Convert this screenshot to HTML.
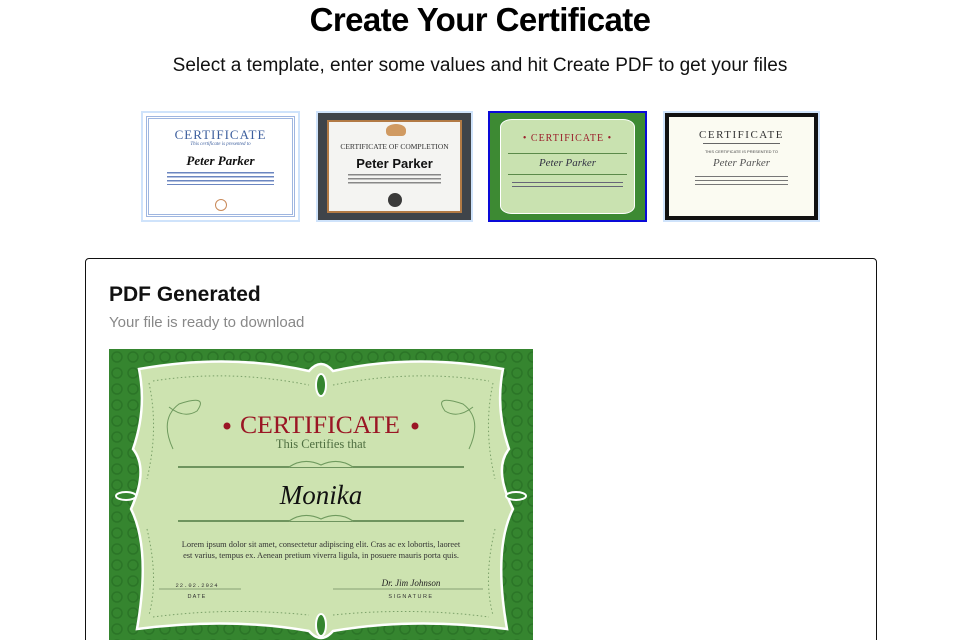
<!DOCTYPE html>
<html><head><meta charset="utf-8">
<style>
*{margin:0;padding:0;box-sizing:border-box}
html,body{width:960px;height:640px;overflow:hidden}
body{background:#fff;font-family:"Liberation Sans",sans-serif;color:#111;position:relative}
.abs{position:absolute}
h1{position:absolute;left:0;width:960px;top:1px;text-align:center;font-size:33px;font-weight:bold;letter-spacing:-0.6px;color:#000}
.sub{position:absolute;left:0;width:960px;top:55px;text-align:center;font-size:19px;color:#111}
.th{position:absolute;top:111px;height:111px;border:2px solid #cfe3fb;overflow:hidden}
.card{position:absolute;left:85px;top:258px;width:792px;height:420px;border:1.5px solid #111;border-radius:4px}
.serif{font-family:"Liberation Serif",serif}
</style></head><body>
<h1>Create Your Certificate</h1>
<div class="sub">Select a template, enter some values and hit Create PDF to get your files</div>

<div class="th" style="left:141px;width:159px;background:#fff">
 <div class="abs" style="left:3px;top:3px;right:3px;bottom:3px;border:3px double #9fb6e0"></div>
 <div class="abs serif" style="left:0;right:0;top:14px;text-align:center;font-size:13px;color:#3d5f9e;letter-spacing:1px">CERTIFICATE</div>
 <div class="abs serif" style="left:0;right:0;top:29px;text-align:center;font-size:5px;color:#3d5f9e;font-style:italic">This certificate is presented to</div>
 <div class="abs serif" style="left:0;right:0;top:40px;text-align:center;font-size:13px;font-style:italic;font-weight:bold">Peter Parker</div>
 <div class="abs" style="left:24px;right:24px;top:58px;height:14px;background:repeating-linear-gradient(#fff 0 1px,#6b86c0 1px 2.5px,#fff 2.5px 4px)"></div>
 <div class="abs" style="left:72px;top:86px;width:12px;height:12px;border-radius:50%;border:1.5px solid #c98a5a"></div>
</div>
<div class="th" style="left:316px;width:157px;background:#3f444a">
 <div class="abs" style="left:9px;top:7px;right:9px;bottom:7px;background:#f4f4f2;border:2px solid #b27a45"></div>
 <div class="abs" style="left:68px;top:11px;width:20px;height:12px;background:#d09a62;border-radius:50% 50% 4px 4px"></div>
 <div class="abs serif" style="left:0;right:0;top:29px;text-align:center;font-size:7.5px;color:#333">CERTIFICATE OF COMPLETION</div>
 <div class="abs" style="left:0;right:0;top:43px;text-align:center;font-size:13px;font-weight:bold;color:#111">Peter Parker</div>
 <div class="abs" style="left:30px;right:30px;top:60px;height:13px;background:repeating-linear-gradient(#f4f4f2 0 1px,#888 1px 2.5px,#f4f4f2 2.5px 4px)"></div>
 <div class="abs" style="left:70px;top:80px;width:14px;height:14px;border-radius:50%;background:#3a3a3a"></div>
</div>
<div class="th" style="left:488px;width:159px;border:2px solid #0a0ad8;background:#3d8a33">
 <div class="abs" style="left:10px;top:6px;right:10px;bottom:6px;background:#c9e2b0;border-radius:12px/8px;border:1px solid #fff"></div>
 <div class="abs serif" style="left:0;right:0;top:20px;text-align:center;font-size:10px;color:#9a1e2a;letter-spacing:1px">• CERTIFICATE •</div>
 <div class="abs" style="left:18px;right:18px;top:40px;border-top:1px solid #5b8a4a"></div>
 <div class="abs serif" style="left:0;right:0;top:44px;text-align:center;font-size:11px;font-style:italic;color:#334">Peter Parker</div>
 <div class="abs" style="left:18px;right:18px;top:61px;border-top:1px solid #5b8a4a"></div>
 <div class="abs" style="left:22px;right:22px;top:68px;height:9px;background:repeating-linear-gradient(#c9e2b0 0 1px,#667 1px 2px,#c9e2b0 2px 4px)"></div>
</div>
<div class="th" style="left:663px;width:157px;background:#111">
 <div class="abs" style="left:4px;top:4px;right:4px;bottom:4px;background:#fbfbf2"></div>
 <div class="abs serif" style="left:0;right:0;top:16px;text-align:center;font-size:11px;letter-spacing:1.5px;color:#333">CERTIFICATE</div>
 <div class="abs" style="left:38px;right:38px;top:30px;border-top:1.5px solid #666"></div>
 <div class="abs" style="left:0;right:0;top:36px;text-align:center;font-size:4px;color:#444">THIS CERTIFICATE IS PRESENTED TO</div>
 <div class="abs serif" style="left:0;right:0;top:44px;text-align:center;font-size:11px;font-style:italic;color:#555">Peter Parker</div>
 <div class="abs" style="left:30px;right:30px;top:62px;height:10px;background:repeating-linear-gradient(#fbfbf2 0 1px,#777 1px 2px,#fbfbf2 2px 4px)"></div>
</div>

<div class="card">
 <div class="abs" style="left:23px;top:24px;font-size:21px;font-weight:bold;color:#111">PDF Generated</div>
 <div class="abs" style="left:23px;top:55px;font-size:15px;color:#888">Your file is ready to download</div>
</div>

<svg class="abs" style="left:109px;top:349px" width="424" height="291" viewBox="0 0 424 291">
 <defs><pattern id="p" width="16" height="16" patternUnits="userSpaceOnUse">
  <rect width="16" height="16" fill="#35852f"/><circle cx="8" cy="8" r="5" fill="none" stroke="#2b7527" stroke-width="1.5"/></pattern></defs>
 <rect width="424" height="291" fill="url(#p)"/>
 <path d="M30,20 Q120,4 200,22 Q212,8 224,22 Q304,4 394,20 Q386,60 400,100 Q384,120 404,160 Q384,200 398,280 Q304,268 224,282 Q212,296 200,282 Q120,268 28,280 Q42,200 22,160 Q40,120 24,100 Q38,60 30,20 Z" fill="#cde3b0" stroke="#fff" stroke-width="2.5"/>
 <path d="M44,32 Q120,20 200,36 M224,36 Q304,20 380,32 M44,268 Q120,258 200,266 M224,266 Q304,258 380,268 M40,34 Q50,80 38,130 M384,34 Q374,80 386,130 M38,180 Q50,230 40,266 M386,180 Q374,230 384,266" fill="none" stroke="#7aa068" stroke-width="1" stroke-dasharray="1.5 2.5"/>
 <ellipse cx="212" cy="36" rx="5" ry="11" fill="#35852f" stroke="#fff" stroke-width="2"/>
 <ellipse cx="212" cy="276" rx="5" ry="11" fill="#35852f" stroke="#fff" stroke-width="2"/>
 <ellipse cx="17" cy="147" rx="10" ry="4" fill="#35852f" stroke="#fff" stroke-width="2"/>
 <ellipse cx="407" cy="147" rx="10" ry="4" fill="#35852f" stroke="#fff" stroke-width="2"/>
 <path d="M64,100 Q50,70 70,55 Q100,45 88,62 Q75,70 60,58 M360,100 Q374,70 354,55 Q324,45 336,62 Q349,70 364,58" fill="none" stroke="#6f9a5e" stroke-width="1"/>
 <text x="131" y="84" textLength="160" lengthAdjust="spacingAndGlyphs" font-family="Liberation Serif,serif" font-size="25" fill="#9a1624">CERTIFICATE</text>
 <circle cx="118" cy="77" r="3.5" fill="#9a1624"/><circle cx="306" cy="77" r="3.5" fill="#9a1624"/>
 <text x="212" y="99" text-anchor="middle" font-family="Liberation Serif,serif" font-size="12.5" fill="#4e6e40">This Certifies that</text>
 <line x1="69" y1="118" x2="355" y2="118" stroke="#4f7a42" stroke-width="1.5"/>
 <line x1="69" y1="172" x2="355" y2="172" stroke="#4f7a42" stroke-width="1.5"/>
 <path d="M180,118 Q195,108 212,116 Q229,108 244,118 M180,172 Q195,162 212,170 Q229,162 244,172" fill="#cde3b0" stroke="#6f9a5e" stroke-width="1.2"/>
 <text x="212" y="155" text-anchor="middle" font-family="Liberation Serif,serif" font-style="italic" font-size="27" fill="#111">Monika</text>
 <text x="212" y="198" text-anchor="middle" font-family="Liberation Serif,serif" font-size="8.4" fill="#333">Lorem ipsum dolor sit amet, consectetur adipiscing elit. Cras ac ex lobortis, laoreet</text>
 <text x="212" y="209" text-anchor="middle" font-family="Liberation Serif,serif" font-size="8.4" fill="#333">est varius, tempus ex. Aenean pretium viverra ligula, in posuere mauris porta quis.</text>
 <text x="88" y="238" text-anchor="middle" font-family="Liberation Mono,monospace" font-size="5.5" fill="#333" letter-spacing="1">22.02.2024</text>
 <line x1="50" y1="240" x2="132" y2="240" stroke="#6f8a60" stroke-width="0.8"/>
 <text x="88" y="249" text-anchor="middle" font-family="Liberation Sans,sans-serif" font-size="5.5" fill="#333" letter-spacing="1.2">DATE</text>
 <text x="302" y="237" text-anchor="middle" font-family="Liberation Serif,serif" font-style="italic" font-size="9" fill="#222">Dr. Jim Johnson</text>
 <line x1="224" y1="240" x2="374" y2="240" stroke="#6f8a60" stroke-width="0.8"/>
 <text x="302" y="249" text-anchor="middle" font-family="Liberation Sans,sans-serif" font-size="5.5" fill="#333" letter-spacing="1.5">SIGNATURE</text>
</svg>
</body></html>
